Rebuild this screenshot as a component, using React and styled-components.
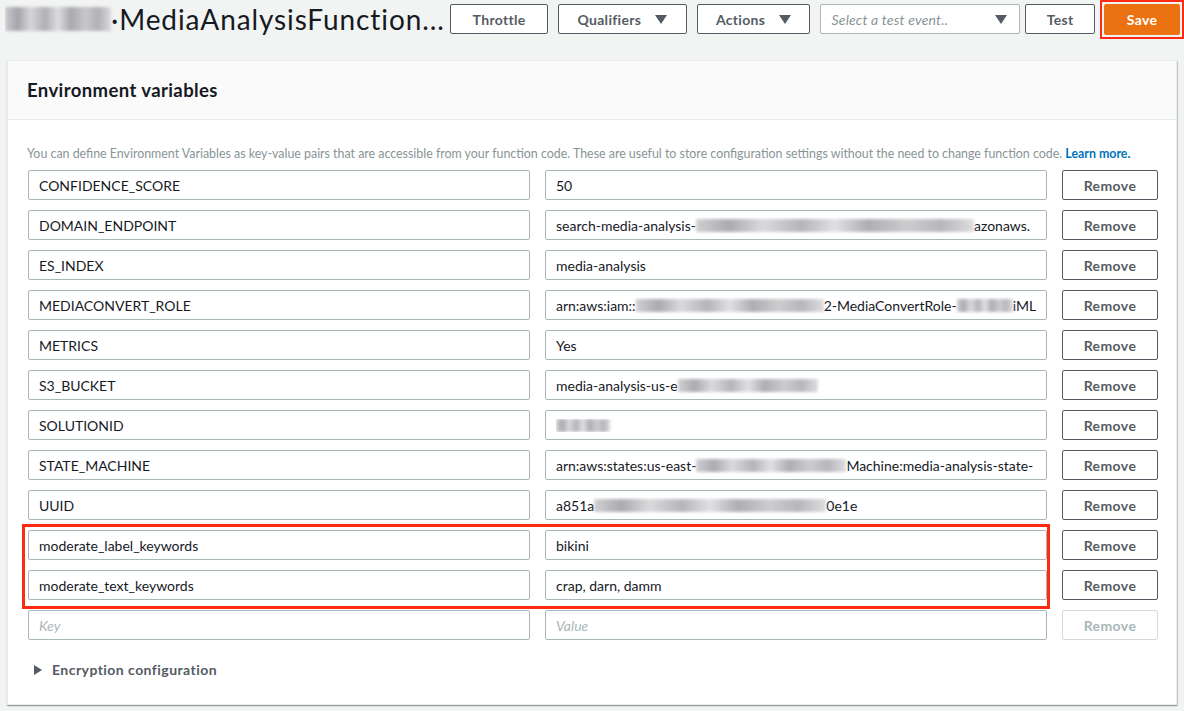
import React from 'react';
import styled, { createGlobalStyle } from 'styled-components';

const GlobalStyle = createGlobalStyle`
  body {
    margin: 0;
    background: #f2f3f3;
    font-family: Lato, "Liberation Sans", sans-serif;
    color: #16191f;
  }
`;

const Page = styled.div`
  width: 1184px;
  height: 711px;
  overflow: hidden;
`;

const TopBar = styled.div`
  display: flex;
  align-items: center;
  height: 38px;
  padding-left: 5px;
`;

const Title = styled.div`
  display: flex;
  align-items: center;
  width: 440px;
  font-size: 28px;
  letter-spacing: 0.9px;
  color: #16191f;
  white-space: nowrap;
  overflow: hidden;
`;

const Blur = styled.span`
  display: inline-block;
  flex: none;
  width: ${p => p.w}px;
  height: ${p => p.h || 13}px;
  vertical-align: middle;
  background: linear-gradient(90deg, #c8c8cc 0%, #9c9ca2 12%, #d4d4d8 24%, #a8a8ae 38%, #dcdce0 50%, #a0a0a6 62%, #c4c4c8 76%, #aaaab0 88%, #d8d8dc 100%);
  filter: blur(1.5px);
  opacity: ${p => p.o || 0.85};
`;

const Btn = styled.button`
  display: inline-flex;
  align-items: center;
  justify-content: center;
  gap: 14px;
  height: 30px;
  width: ${p => p.w}px;
  margin-left: ${p => p.ml}px;
  padding: 0;
  border: 1px solid #545b64;
  border-radius: 2px;
  background: #fff;
  color: #545b64;
  font-family: inherit;
  font-size: 14px;
  font-weight: 700;
  letter-spacing: 0.3px;
`;

const Caret = styled.span`
  width: 0;
  height: 0;
  border-left: 6px solid transparent;
  border-right: 6px solid transparent;
  border-top: 9px solid #545b64;
`;

const SelectBox = styled.div`
  display: flex;
  align-items: center;
  justify-content: space-between;
  box-sizing: border-box;
  height: 30px;
  width: 200px;
  margin-left: 10px;
  padding: 0 12px 0 10px;
  border: 1px solid #aab7b8;
  border-radius: 2px;
  background: #fff;
  color: #879596;
  font-size: 14px;
  font-style: italic;
  letter-spacing: 0.2px;
`;

const SaveWrap = styled.div`
  margin-left: 5px;
  padding: 2px;
  border: 2px solid #ff2a12;
`;

const SaveBtn = styled(Btn)`
  background: #ec7211;
  border-color: #ec7211;
  color: #fff;
  height: 31px;
`;

const Panel = styled.div`
  margin: 22px 0 0 7px;
  width: 1170px;
  height: 645px;
  box-sizing: border-box;
  background: #fff;
  border: 1px solid #eaeded;
  box-shadow: 0 1px 1px 0 rgba(0, 28, 36, 0.3), 1px 1px 1px 0 rgba(0, 28, 36, 0.15);
`;

const PanelHead = styled.div`
  height: 58px;
  display: flex;
  align-items: center;
  padding-left: 19px;
  background: #fafafa;
  border-bottom: 1px solid #eaeded;
  font-size: 18.5px;
  font-weight: 700;
  letter-spacing: 0.4px;
`;

const PanelBody = styled.div`
  padding: 26px 20px 0 19px;
`;

const Desc = styled.div`
  font-size: 12.4px;
  line-height: 16px;
  color: #879596;
  white-space: nowrap;
  margin-bottom: 8px;
  a {
    color: #0073bb;
    font-weight: 700;
    text-decoration: none;
  }
`;

const Rows = styled.div`
  display: flex;
  flex-direction: column;
  gap: 10px;
  padding-left: 1px;
`;

const Row = styled.div`
  display: grid;
  grid-template-columns: 502px 502px 96px;
  column-gap: 15px;
`;

const Highlight = styled.div`
  position: relative;
  display: flex;
  flex-direction: column;
  gap: 10px;
  &::after {
    content: '';
    position: absolute;
    left: -6px;
    top: -6px;
    width: 1028px;
    bottom: -9px;
    border: 3px solid #ff2a12;
    box-sizing: border-box;
    pointer-events: none;
  }
`;

const Field = styled.div`
  box-sizing: border-box;
  height: 30px;
  display: flex;
  align-items: center;
  padding: 0 10px;
  border: 1px solid #aab7b8;
  border-radius: 2px;
  background: #fff;
  font-size: 14px;
  color: ${p => (p.placeholder ? '#aab7b8' : '#16191f')};
  font-style: ${p => (p.placeholder ? 'italic' : 'normal')};
`;

const FieldText = styled.div`
  flex: 1;
  display: flex;
  align-items: center;
  white-space: nowrap;
  overflow: hidden;
`;

const RemoveBtn = styled.button`
  height: 30px;
  padding: 0;
  border: 1px solid ${p => (p.disabled ? '#d5dbdb' : '#545b64')};
  border-radius: 2px;
  background: #fff;
  color: ${p => (p.disabled ? '#aab7b8' : '#545b64')};
  font-family: inherit;
  font-size: 14px;
  font-weight: 700;
  letter-spacing: 0.4px;
`;

const Expander = styled.div`
  display: flex;
  align-items: center;
  gap: 10px;
  margin: 21px 0 0 7px;
  font-size: 14px;
  font-weight: 700;
  letter-spacing: 0.45px;
  color: #545b64;
`;

const Tri = styled.span`
  width: 0;
  height: 0;
  border-top: 5px solid transparent;
  border-bottom: 5px solid transparent;
  border-left: 8px solid #545b64;
`;

const vars = [
  ['CONFIDENCE_SCORE', ['50']],
  ['DOMAIN_ENDPOINT', ['search-media-analysis-', 278, 'azonaws.']],
  ['ES_INDEX', ['media-analysis']],
  ['MEDIACONVERT_ROLE', ['arn:aws:iam::', 188, '2-MediaConvertRole-', 56, 'iML']],
  ['METRICS', ['Yes']],
  ['S3_BUCKET', ['media-analysis-us-e', 140]],
  ['SOLUTIONID', [54]],
  ['STATE_MACHINE', ['arn:aws:states:us-east-', 150, 'Machine:media-analysis-state-']],
  ['UUID', ['a851a', 232, '0e1e']],
];

const highlighted = [
  ['moderate_label_keywords', ['bikini']],
  ['moderate_text_keywords', ['crap, darn, damm']],
];

function Value({ parts }) {
  return (
    <Field>
      <FieldText>
        {parts.map((p, i) =>
          typeof p === 'number' ? <Blur key={i} w={p} /> : <span key={i}>{p}</span>
        )}
      </FieldText>
    </Field>
  );
}

function VarRow({ name, parts }) {
  return (
    <Row>
      <Field><FieldText>{name}</FieldText></Field>
      <Value parts={parts} />
      <RemoveBtn>Remove</RemoveBtn>
    </Row>
  );
}

export default function App() {
  return (
    <Page>
      <GlobalStyle />
      <TopBar>
        <Title>
          <Blur w={106} h={24} o={0.9} />
          <span>·MediaAnalysisFunction...</span>
        </Title>
        <Btn w={98} ml={6}>Throttle</Btn>
        <Btn w={129} ml={10}>Qualifiers <Caret /></Btn>
        <Btn w={114} ml={10}>Actions <Caret /></Btn>
        <SelectBox>
          <span>Select a test event..</span>
          <Caret />
        </SelectBox>
        <Btn w={70} ml={5}>Test</Btn>
        <SaveWrap>
          <SaveBtn w={76} ml={0}>Save</SaveBtn>
        </SaveWrap>
      </TopBar>
      <Panel>
        <PanelHead>Environment variables</PanelHead>
        <PanelBody>
          <Desc>
            You can define Environment Variables as key-value pairs that are accessible from your function code. These are useful to store configuration settings without the need to change function code. <a href="#">Learn more.</a>
          </Desc>
          <Rows>
            {vars.map(([n, p]) => <VarRow key={n} name={n} parts={p} />)}
            <Highlight>
              {highlighted.map(([n, p]) => <VarRow key={n} name={n} parts={p} />)}
            </Highlight>
            <Row>
              <Field placeholder><FieldText>Key</FieldText></Field>
              <Field placeholder><FieldText>Value</FieldText></Field>
              <RemoveBtn disabled>Remove</RemoveBtn>
            </Row>
          </Rows>
          <Expander>
            <Tri />
            Encryption configuration
          </Expander>
        </PanelBody>
      </Panel>
    </Page>
  );
}
